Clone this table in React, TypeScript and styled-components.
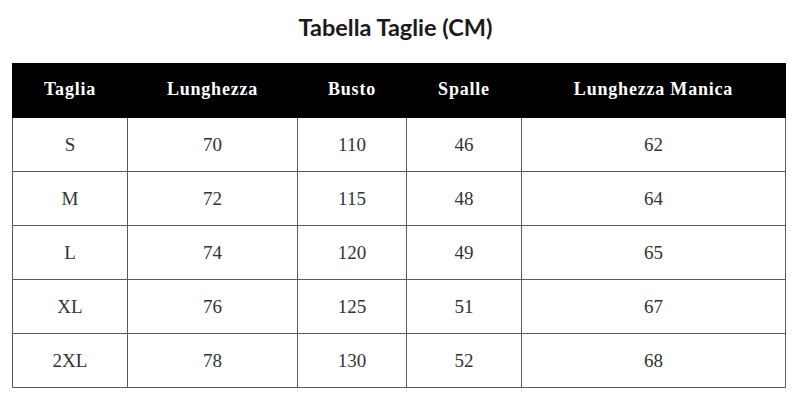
import React from "react";
import styled, { createGlobalStyle } from "styled-components";

const Global = createGlobalStyle`
  html, body { margin: 0; padding: 0; background: #fff; }
  body { width: 800px; height: 407px; overflow: hidden; }
`;

const Page = styled.div`
  width: 800px;
  height: 407px;
  display: flex;
  flex-direction: column;
  align-items: flex-start;
  padding: 13px 0 0 12px;
  box-sizing: border-box;
`;

const Title = styled.h2`
  margin: 0 0 22px 0;
  width: 773px;
  box-sizing: border-box;
  padding-right: 6px;
  text-align: center;
  font-family: "Lato", sans-serif;
  font-weight: 700;
  font-size: 23.5px;
  line-height: 28px;
  color: #1a1a1a;
`;

const Table = styled.table`
  border-collapse: collapse;
  table-layout: fixed;
  width: 773px;
  font-family: "Liberation Serif", serif;
`;

const Col = styled.col<{ $w: number }>`
  width: ${(p) => p.$w}px;
`;

const HeadCell = styled.th`
  background: #000;
  color: #fff;
  font-weight: 700;
  font-size: 18px;
  height: 51px;
  padding: 0 0 2px 0;
  text-align: center;
  border: 1px solid #000;
  letter-spacing: 0.8px;
`;

const Cell = styled.td`
  height: 53px;
  padding: 0;
  text-align: center;
  font-size: 19px;
  color: #333;
  border: 1px solid #5a5a5a;
`;

const widths = [115, 170, 109, 115, 264];
const headers = ["Taglia", "Lunghezza", "Busto", "Spalle", "Lunghezza Manica"];
const rows = [
  ["S", "70", "110", "46", "62"],
  ["M", "72", "115", "48", "64"],
  ["L", "74", "120", "49", "65"],
  ["XL", "76", "125", "51", "67"],
  ["2XL", "78", "130", "52", "68"],
];

export default function App() {
  return (
    <>
      <Global />
      <Page>
        <Title>Tabella Taglie (CM)</Title>
        <Table>
          <colgroup>
            {widths.map((w, i) => (
              <Col key={i} $w={w} />
            ))}
          </colgroup>
          <thead>
            <tr>
              {headers.map((h) => (
                <HeadCell key={h}>{h}</HeadCell>
              ))}
            </tr>
          </thead>
          <tbody>
            {rows.map((r) => (
              <tr key={r[0]}>
                {r.map((c, i) => (
                  <Cell key={i}>{c}</Cell>
                ))}
              </tr>
            ))}
          </tbody>
        </Table>
      </Page>
    </>
  );
}
